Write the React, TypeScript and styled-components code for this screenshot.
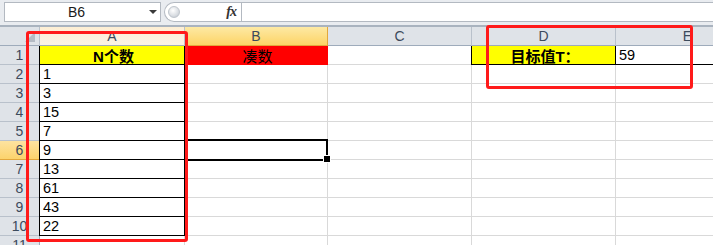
import React from 'react';
import styled, { createGlobalStyle } from 'styled-components';

const GlobalStyle = createGlobalStyle`
  html, body {
    margin: 0;
    padding: 0;
    background: #ffffff;
  }
  * {
    box-sizing: border-box;
  }
`;

const Page = styled.div`
  position: relative;
  width: 713px;
  height: 245px;
  overflow: hidden;
  background: #fff;
  font-family: "Liberation Sans", "Noto Sans CJK SC", sans-serif;
`;

const FormulaBar = styled.div`
  display: flex;
  align-items: center;
  height: 27px;
  padding: 3px 0 4px 4px;
  background: #e9ecf0;
  border-bottom: 2px solid #a9b3bf;
`;

const NameBox = styled.div`
  position: relative;
  display: flex;
  align-items: center;
  justify-content: center;
  width: 157px;
  height: 20px;
  background: #fff;
  border: 1px solid #b3b9c1;
  font-size: 14px;
  color: #1a1a1a;
  padding-right: 12px;
`;

const DropArrow = styled.span`
  position: absolute;
  right: 3px;
  top: 7px;
  width: 0;
  height: 0;
  border-left: 4px solid transparent;
  border-right: 4px solid transparent;
  border-top: 4px solid #3a3a3a;
`;

const FxBox = styled.div`
  display: flex;
  align-items: center;
  justify-content: space-between;
  margin-left: 3px;
  width: 77px;
  height: 20px;
  background: #fff;
  border: 1px solid #b3b9c1;
  border-right: none;
  border-radius: 10px 0 0 10px;
  padding: 0 5px 0 3px;
`;

const Knob = styled.span`
  width: 12px;
  height: 12px;
  border-radius: 50%;
  background: radial-gradient(circle at 40% 35%, #ffffff 0%, #d9dde2 60%, #b8bec6 100%);
  border: 1px solid #bfc5cc;
`;

const Fx = styled.span`
  font-family: "Liberation Serif", serif;
  font-style: italic;
  font-weight: bold;
  font-size: 14px;
  color: #333;
  letter-spacing: -1px;
`;

const FormulaInput = styled.div`
  flex: 1;
  height: 20px;
  background: #fff;
  border: 1px solid #b3b9c1;
  border-right: none;
`;

const Sheet = styled.div`
  display: grid;
  grid-template-columns: 40px 145px 143px 144px 144px 144px;
  grid-auto-rows: 19px;
`;

const ColHead = styled.div<{ $sel?: 'full' | 'soft' }>`
  display: flex;
  align-items: center;
  justify-content: center;
  font-size: 14px;
  color: #3c4a5c;
  border-right: 1px solid ${p => (p.$sel === 'full' ? '#e2a73c' : '#b9c1cb')};
  border-bottom: 1px solid ${p => (p.$sel === 'full' ? '#e2a73c' : '#9eabbb')};
  background: ${p =>
    p.$sel === 'full'
      ? 'linear-gradient(#fde9a4, #fdd466)'
      : p.$sel === 'soft'
      ? 'linear-gradient(#fdeed3, #fbf3e6)'
      : '#dfe3e8'};
`;

const Corner = styled.div`
  position: relative;
  background: #dfe3e8;
  border-right: 1px solid #b9c1cb;
  border-bottom: 1px solid #9eabbb;
  &::after {
    content: '';
    position: absolute;
    right: 4px;
    bottom: 3px;
    width: 0;
    height: 0;
    border-left: 10px solid transparent;
    border-bottom: 10px solid #b4bbc4;
  }
`;

const RowHead = styled.div<{ $sel?: boolean }>`
  display: flex;
  align-items: center;
  justify-content: center;
  font-size: 14px;
  color: #3c4a5c;
  border-right: 1px solid ${p => (p.$sel ? '#e2a73c' : '#9eabbb')};
  border-bottom: 1px solid ${p => (p.$sel ? '#e2a73c' : '#b9c1cb')};
  background: ${p => (p.$sel ? 'linear-gradient(#fde3a0, #fcd36c)' : '#dfe3e8')};
`;

type Fill = 'yellow' | 'red' | undefined;

const Cell = styled.div<{
  $fill?: Fill;
  $boxed?: boolean;
  $bold?: boolean;
  $center?: boolean;
  $active?: boolean;
}>`
  position: relative;
  display: flex;
  align-items: center;
  justify-content: ${p => (p.$center ? 'center' : 'flex-start')};
  padding-left: 3px;
  font-size: ${p => (p.$center ? '15px' : '14.5px')};
  font-weight: ${p => (p.$bold ? 'bold' : 'normal')};
  color: #000;
  white-space: nowrap;
  background: ${p => (p.$fill === 'yellow' ? '#ffff00' : p.$fill === 'red' ? '#ff0000' : '#fff')};
  border-right: 1px solid ${p => (p.$boxed ? '#000' : p.$fill ? 'transparent' : '#d9d9d9')};
  border-bottom: 1px solid ${p => (p.$boxed ? '#000' : p.$fill ? 'transparent' : '#d9d9d9')};
  ${p => (p.$boxed ? 'box-shadow: -1px 0 0 #000;' : '')}
  ${p =>
    p.$active
      ? `
    &::before {
      content: '';
      position: absolute;
      left: -1px;
      top: -2px;
      right: -1px;
      bottom: -2px;
      border: 2px solid #000;
      z-index: 2;
    }
    &::after {
      content: '';
      position: absolute;
      right: -4px;
      bottom: -4px;
      width: 6px;
      height: 6px;
      background: #000;
      border: 1px solid #fff;
      z-index: 3;
    }
  `
      : ''}
`;

const Mark = styled.div<{ $x: number; $y: number; $w: number; $h: number }>`
  position: absolute;
  left: ${p => p.$x}px;
  top: ${p => p.$y}px;
  width: ${p => p.$w}px;
  height: ${p => p.$h}px;
  border: 3px solid #ff1a1a;
  border-radius: 3px;
  pointer-events: none;
  z-index: 5;
`;

const numbers = ['1', '3', '15', '7', '9', '13', '61', '43', '22'];

const App: React.FC = () => {
  return (
    <Page>
      <GlobalStyle />
      <FormulaBar>
        <NameBox>
          B6
          <DropArrow />
        </NameBox>
        <FxBox>
          <Knob />
          <Fx>fx</Fx>
        </FxBox>
        <FormulaInput />
      </FormulaBar>

      <Sheet>
        <Corner />
        <ColHead $sel="soft">A</ColHead>
        <ColHead $sel="full">B</ColHead>
        <ColHead>C</ColHead>
        <ColHead>D</ColHead>
        <ColHead>E</ColHead>

        <RowHead>1</RowHead>
        <Cell $fill="yellow" $boxed $bold $center>N个数</Cell>
        <Cell $fill="red" $center>凑数</Cell>
        <Cell />
        <Cell $fill="yellow" $boxed $bold $center>目标值T：</Cell>
        <Cell $boxed>59</Cell>

        {numbers.map((n, i) => {
          const row = i + 2;
          return (
            <React.Fragment key={row}>
              <RowHead $sel={row === 6}>{row}</RowHead>
              <Cell $boxed>{n}</Cell>
              <Cell $active={row === 6} />
              <Cell />
              <Cell />
              <Cell />
            </React.Fragment>
          );
        })}

        <RowHead>11</RowHead>
        <Cell />
        <Cell />
        <Cell />
        <Cell />
        <Cell />
      </Sheet>

      <Mark $x={26} $y={31} $w={162} $h={211} />
      <Mark $x={486} $y={25} $w={207} $h={64} />
    </Page>
  );
};

export default App;
